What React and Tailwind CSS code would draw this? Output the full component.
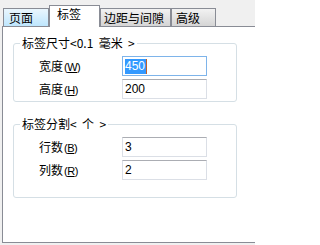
import React from 'react';

const font = { fontFamily: '"Noto Sans CJK SC", "Liberation Sans", sans-serif' };

const Key = ({ k }) => (
  <span className="font-['Liberation_Sans'] text-[11px] tracking-[-0.5px] ml-[1px]">
    (<span className="underline">{k}</span>)
  </span>
);

const Field = ({ label, k, value, focused }) => (
  <div className="flex items-center">
    <div className="w-[108px] pl-[25px] text-[12px] leading-[14px] text-black whitespace-nowrap">
      {label}
      <Key k={k} />
    </div>
    <div
      className={`w-[85px] h-[20px] flex items-center pl-[2px] bg-white border font-['Liberation_Sans'] text-[12px] ${
        focused ? 'border-[#7eb4ea]' : 'border-[#dbdfe6] border-t-[#abadb3]'
      }`}
    >
      {focused ? (
        <span className="bg-[#3399ff] text-white leading-[15px] pr-[1px] border-r border-r-[#c0602a]">{value}</span>
      ) : (
        <span>{value}</span>
      )}
    </div>
  </div>
);

const Group = ({ title, className, children }) => (
  <fieldset className={`ml-[10px] w-[224px] border border-[#d5dfe5] rounded-[3px] ${className}`}>
    <legend className="ml-[6px] px-[2px] text-[12px] leading-[14px] text-black whitespace-pre">{title}</legend>
    {children}
  </fieldset>
);

export default function App() {
  const tabs = [
    { name: '页面', w: 'w-[46px] pl-[5px]', hover: true },
    { name: '标签', w: 'w-[51px] pl-[7px]', active: true },
    { name: '边距与间隙', w: 'w-[71px] pl-[3px]' },
    { name: '高级', w: 'w-[45px] pl-[4px]' },
  ];

  return (
    <div className="w-[255px] h-[245px] bg-[#f0f0f0] overflow-hidden text-[12px]" style={font}>
      <div className="h-[26px] flex items-end pl-[3px]">
        {tabs.map((t) =>
          t.active ? (
            <div
              key={t.name}
              className={`${t.w} h-[22px] -mb-px relative z-10 bg-white border border-b-0 border-[#898c95] pt-[1px] leading-[14px]`}
            >
              {t.name}
            </div>
          ) : (
            <div
              key={t.name}
              className={`${t.w} h-[18px] flex items-center border border-b-0 border-[#898c95] ${
                t.hover
                  ? 'bg-gradient-to-b from-[#eaf6fd] to-[#bee6fd]'
                  : 'bg-gradient-to-b from-[#f2f2f2] to-[#d5d5d5]'
              }`}
            >
              {t.name}
            </div>
          )
        )}
      </div>
      <div className="ml-[2px] h-[217px] bg-white border-t border-l border-b border-[#898c95] flex flex-col">
        <Group title="标签尺寸<0.1  毫米  >" className="mt-[9px] pb-[2px]">
          <div className="mt-[6px] flex flex-col gap-[3px]">
            <Field label="宽度" k="W" value="450" focused />
            <Field label="高度" k="H" value="200" />
          </div>
        </Group>
        <Group title="标签分割<  个  >" className="mt-[15px] pb-[17px]">
          <div className="mt-[6px] flex flex-col gap-[3px]">
            <Field label="行数" k="B" value="3" />
            <Field label="列数" k="R" value="2" />
          </div>
        </Group>
      </div>
    </div>
  );
}
